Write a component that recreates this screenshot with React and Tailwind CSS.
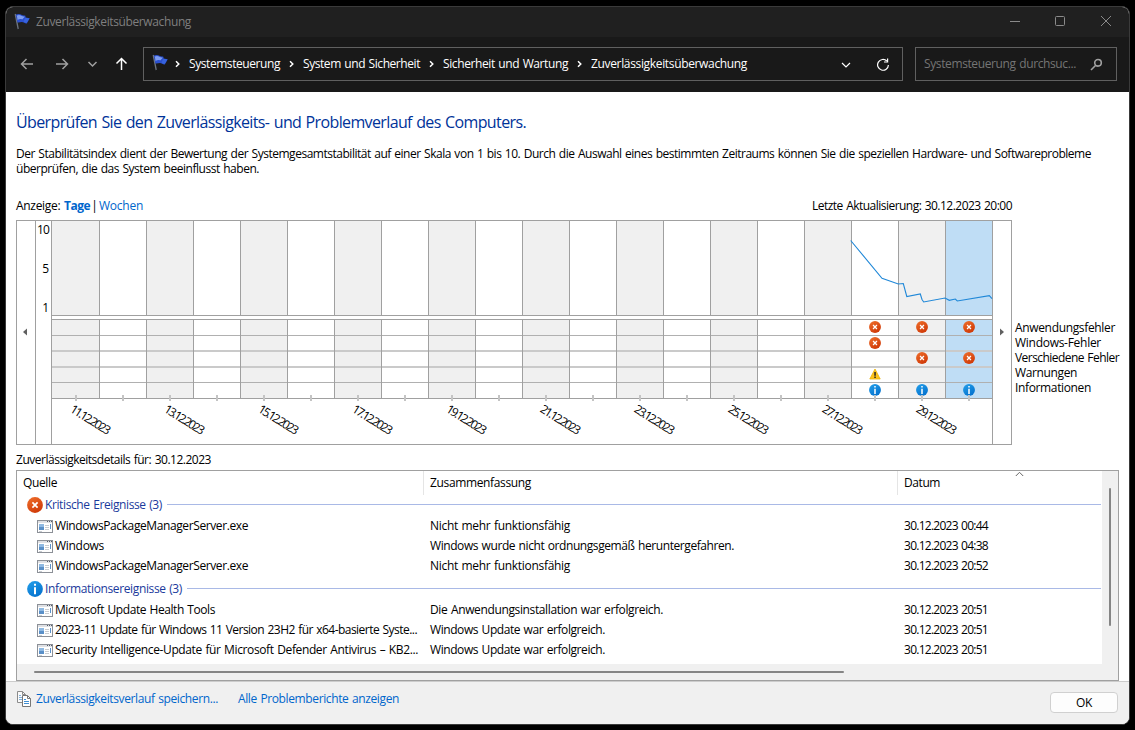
import React, { useLayoutEffect, useRef } from "react";

/* Text run whose tracking is adjusted so that it occupies `w` pixels. */
function T({ w, children, className = "" }) {
  const ref = useRef(null);
  useLayoutEffect(() => {
    const el = ref.current;
    if (!w || !el) return;
    el.style.letterSpacing = "0px";
    const natural = el.getBoundingClientRect().width;
    el.style.letterSpacing = `${(w - natural) / children.length}px`;
  }, [w, children]);
  return (
    <span ref={ref} className={`inline-block whitespace-pre [word-spacing:0.8px] ${className}`}>
      {children}
    </span>
  );
}

function Flag({ className = "" }) {
  return (
    <svg className={className} width="17" height="17" viewBox="0 0 17 17">
      <path d="M0.6 1.2 L2 0.8 L4.8 15.8 L3.6 16.2 Z" fill="#6c7480" />
      <path d="M1.8 1.8 C3.8 0.6 5.8 0.8 7.4 1.8 C9 2.8 10.4 2.2 11.4 2.8 L11.6 4.4 L15.8 5.2 L12.8 10.6 C10.8 10.8 9.8 9 7.8 9 C6.2 9 5 9.8 3.4 9.4 Z" fill="#2b50d0" />
      <path d="M2.8 2.6 C4.8 1.4 6.2 2 7.6 3 L10.8 3.8 L8.2 6.4 C6.4 5.8 5 6.2 3.6 7 Z" fill="#7d9cf0" />
      <path d="M11.4 4.8 L15.2 5.5 L12.8 9.8 C11.4 10 10.8 9 9.4 8.4 Z" fill="#3763dd" />
    </svg>
  );
}

function ErrorIcon({ size }) {
  return (
    <svg width={size} height={size} viewBox="0 0 16 16">
      <defs>
        <linearGradient id="err" x1="0" y1="0" x2="0.6" y2="1">
          <stop offset="0" stopColor="#f0702c" />
          <stop offset="1" stopColor="#d03a08" />
        </linearGradient>
      </defs>
      <circle cx="8" cy="8" r="7.9" fill="url(#err)" />
      <path d="M5.4 5.4 L10.6 10.6 M10.6 5.4 L5.4 10.6" stroke="#fff" strokeWidth="1.7" />
    </svg>
  );
}

function InfoIcon({ size }) {
  return (
    <svg width={size} height={size} viewBox="0 0 16 16">
      <defs>
        <linearGradient id="inf" x1="0" y1="0" x2="0.6" y2="1">
          <stop offset="0" stopColor="#25a0ea" />
          <stop offset="1" stopColor="#0573cf" />
        </linearGradient>
      </defs>
      <circle cx="8" cy="8" r="7.9" fill="url(#inf)" />
      <path d="M7 2.8h2v2H7z M7 6.2h2v7H7z" fill="#fff" />
    </svg>
  );
}

function WarnIcon() {
  return (
    <svg width="12" height="12" viewBox="0 0 12 12">
      <path d="M6 1 L11.2 11 H0.8 Z" fill="#fcc21b" stroke="#eab308" strokeWidth="0.8" strokeLinejoin="round" />
      <path d="M5.3 4h1.5v3.8H5.3z M5.3 8.6h1.5V10H5.3z" fill="#222" />
    </svg>
  );
}

function AppIcon() {
  return (
    <svg className="mt-px shrink-0" width="16" height="13" viewBox="0 0 16 13" shapeRendering="crispEdges">
      <path d="M0 0H16V13H0Z" fill="#8c9097" />
      <path d="M1 1H15V12H1Z" fill="#fff" />
      <path d="M1 1H15V3H1Z" fill="#dfe1e5" />
      <path d="M10 1h1v1h-1z M12 1h1v1h-1z M14 1h1v1h-1z" fill="#555b66" />
      <path d="M2 4H7V10H2Z" fill="#8fb9e2" />
      <path d="M2 7H7V10H2Z" fill="#5a90c8" />
      <path d="M8 5h4v1H8z M8 7h4v1H8z M8 9h4v1H8z M2 11h3v1H2z" fill="#c9cdd2" />
      <path d="M13 4H14V9H13Z" fill="#5b92cc" />
    </svg>
  );
}

function CopyIcon() {
  return (
    <svg width="15" height="17" viewBox="0 0 15 17">
      <path d="M0.5 0.5H5.5L8.5 3.5V11.5H0.5Z" fill="#fafafa" stroke="#8b8b8b" />
      <path d="M5.5 0.5V3.5H8.5" fill="none" stroke="#8b8b8b" />
      <path d="M2 4.5H4M2 6.5H5M2 8.5H5" stroke="#7fb0dc" />
      <path d="M5.5 4.5H10.5L13.5 7.5V15.5H5.5Z" fill="#fff" stroke="#777" />
      <path d="M10.5 4.5V7.5H13.5" fill="none" stroke="#777" />
      <path d="M7 8.5H9M7 10.5H12M7 12.5H12" stroke="#3f8fd4" />
    </svg>
  );
}

function Crumb() {
  return (
    <svg width="6" height="8" viewBox="0 0 6 8" fill="none" stroke="#fff" strokeWidth="1.5">
      <path d="M1 1.2 L3.8 4 L1 6.8" />
    </svg>
  );
}

const COLS = Array.from({ length: 20 }, (_, i) => i);
const THIN = "border-b border-b-[#b0b0b0] pb-[2px]";
const ROWS = [
  { h: "h-[16px]", line: THIN, icons: { 17: "e", 18: "e", 19: "e" } },
  { h: "h-[16px]", line: "border-b-2 border-b-[#cacaca]", icons: { 17: "e" } },
  { h: "h-[16px]", line: "border-b-2 border-b-[#cacaca] pb-[2px]", icons: { 18: "e", 19: "e" } },
  { h: "h-[15px]", line: THIN, icons: { 17: "w" } },
  { h: "h-[16px]", line: "border-b border-b-[#a0a0a0] pb-px", icons: { 17: "i", 18: "i", 19: "i" } },
];
const DATES = ["11", "13", "15", "17", "19", "21", "23", "25", "27", "29"];

const cellBg = (i) => (i === 19 ? "bg-[#bfddf5]" : i % 2 === 0 ? "bg-[#f0f0f0]" : "bg-white");
const cellW = (i) => (i === 0 ? "w-[48px]" : i === 19 ? "w-[46px]" : "w-[47px]");

function Chart() {
  return (
    <div className="flex h-[225px] w-[996px] border border-[#a0a0a0]">
      <div className="flex w-[19px] items-center justify-center border-r border-[#a0a0a0]">
        <svg className="-mt-[2px] -ml-0.5" width="4" height="8" viewBox="0 0 4 8"><path d="M4 0.5V7.5L0 4Z" fill="#606060" /></svg>
      </div>
      <div className="flex h-[95px] w-[15px] flex-col items-end justify-between pr-[2px] leading-[17px]">
        <T w={12}>10</T>
        <span>5</span>
        <span>1</span>
      </div>
      <div className="relative flex w-[942px] flex-col border-x border-[#a0a0a0]">
        <div className="flex h-[95px] border-b border-[#a0a0a0]">
          {COLS.map((i) => (
            <div key={i} className={`${cellW(i)} ${i < 19 ? "border-r" : ""} border-[#a0a0a0] ${cellBg(i)}`} />
          ))}
        </div>
        <div className="h-[3px]" />
        <div className="flex flex-col border-t border-[#a0a0a0]">
          {ROWS.map((r, n) => (
            <div key={n} className={`flex ${r.h}`}>
              {COLS.map((i) => (
                <div key={i} className={`flex h-full ${cellW(i)} ${i < 19 ? "border-r border-r-[#a0a0a0]" : ""}`}>
                  <div className={`flex flex-1 items-center justify-center ${r.line} ${cellBg(i)}`}>
                    {r.icons[i] === "e" && <ErrorIcon size={12} />}
                    {r.icons[i] === "i" && <InfoIcon size={12} />}
                    {r.icons[i] === "w" && <WarnIcon />}
                  </div>
                </div>
              ))}
            </div>
          ))}
        </div>
        <div className="-mt-1 flex">
          {COLS.map((i) => (
            <div key={i} className={`flex justify-center ${i === 0 ? "w-[48px]" : "w-[47px]"}`}>
              <div className="h-[6px] w-[2px] bg-[#c4c4c4]" />
            </div>
          ))}
        </div>
        <div className="flex pt-px">
          {DATES.map((d) => (
            <div key={d} className="w-[94px] shrink-0 pl-[23px]">
              <div className="h-[14px] w-[50px] origin-top-left rotate-[32deg] text-[12px] leading-[14px]">
                <T w={41.5}>{`${d}.12.2023`}</T>
              </div>
            </div>
          ))}
        </div>
        <svg className="absolute top-0 left-0" width="941" height="94" viewBox="52 221 941 94" fill="none">
          <polyline points="850.7,240.5 882,278.3 898.3,284 903.3,283.5 906.8,296.5 920.3,294 922,299.5 923.7,302 945,298 949.3,300.3 955.3,299 957.3,301 989.3,295.7 992,298.7" stroke="#2088d8" strokeWidth="1.1" />
        </svg>
      </div>
      <div className="flex flex-1 items-center justify-center">
        <svg className="-mt-[2px] -ml-px" width="4" height="8" viewBox="0 0 4 8"><path d="M0 0.5V7.5L4 4Z" fill="#606060" /></svg>
      </div>
    </div>
  );
}

function Group({ icon, label, w }) {
  return (
    <div className="flex h-[24px] items-center pr-px pl-[10px]">
      {icon}
      <T w={w} className="ml-[2px] text-[#1a3a9c]">{label}</T>
      <div className="-mt-px ml-[5px] h-px flex-1 bg-[#a9b9e6]" />
    </div>
  );
}

function Item({ a, aw, b, bw, c }) {
  return (
    <div className="flex h-[20px] items-center">
      <div className="flex w-[413px] items-center pl-[20px]">
        <AppIcon />
        <T w={aw} className="ml-[2px]">{a}</T>
      </div>
      <div className="w-[474px]"><T w={bw}>{b}</T></div>
      <T w={84}>{c}</T>
    </div>
  );
}

export default function App() {
  return (
    <div className="h-[730px] w-[1135px] overflow-hidden bg-black pt-[6px] pl-[5px] font-['Open_Sans','Noto_Sans',sans-serif] text-[12px] leading-[16px] text-black">
      <div className="flex h-[719px] w-[1125px] flex-col overflow-hidden rounded-lg border border-[#3a3a3a] bg-white">
        <header className="flex h-[30px] shrink-0 items-center bg-[#202020] pb-[2px] pl-[8px]">
          <Flag />
          <T w={155} className="mt-[2px] ml-[5px] text-[#7f7f7f]">Zuverlässigkeitsüberwachung</T>
          <div className="flex-1" />
          <svg width="104" height="12" viewBox="0 0 104 12" fill="none" stroke="#8a8a8a">
            <path d="M1 6.5H11" />
            <rect x="46.5" y="1.5" width="9" height="9" rx="1" />
            <path d="M92 1L102 11M102 1L92 11" />
          </svg>
          <div className="w-[16px]" />
        </header>
        <nav className="flex h-[55px] shrink-0 items-center bg-[#191919] pb-[2px] text-white">
          <svg className="ml-[14px] shrink-0" width="123" height="16" viewBox="0 0 123 16" fill="none" strokeWidth="1.5">
            <path d="M13 8H1.5M6.5 3L1.5 8L6.5 13" stroke="#a0a0a0" />
            <path d="M36 8H47.5M42.5 3L47.5 8L42.5 13" stroke="#a0a0a0" />
            <path d="M68.5 6L72.5 10L76.5 6" stroke="#a0a0a0" />
            <path d="M101.5 14V2.5M96.5 7.5L101.5 2.5L106.5 7.5" stroke="#fff" />
          </svg>
          <div className="flex h-[34px] w-[760px] shrink-0 items-center border border-[#606060] pl-[8px]">
            <Flag className="-mt-0.5" />
            <div className="ml-[6px] flex items-center">
              <Crumb />
              <T w={91} className="ml-[8px]">Systemsteuerung</T>
              <div className="w-[9px]" /><Crumb />
              <T w={117} className="ml-[8px]">System und Sicherheit</T>
              <div className="w-[9px]" /><Crumb />
              <T w={125} className="ml-[8px]">Sicherheit und Wartung</T>
              <div className="w-[9px]" /><Crumb />
              <T w={156} className="ml-[8px]">Zuverlässigkeitsüberwachung</T>
            </div>
            <div className="flex-1" />
            <svg className="mr-[12px]" width="50" height="14" viewBox="0 0 50 14" fill="none" stroke="#fff" strokeWidth="1.2">
              <path d="M2 6L6 10L10 6" />
              <path d="M46.8 4A5.4 5.4 0 1 0 48.4 8" />
              <path d="M47.6 1.5V5H44" />
            </svg>
          </div>
          <div className="ml-[12px] flex h-[34px] w-[202px] shrink-0 items-center border border-[#606060] pl-[8px] text-[#757575]">
            <T w={152}>Systemsteuerung durchsuc...</T>
            <svg className="mt-px ml-[14px]" width="13" height="13" viewBox="0 0 13 13" fill="none" stroke="#a0a0a0" strokeWidth="1.6">
              <circle cx="8" cy="4.8" r="3.3" />
              <path d="M5.5 7.5L1 12" />
            </svg>
          </div>
        </nav>

        <main className="h-[589px] shrink-0 pl-[10px]">
          <h1 className="pt-[20px] text-[16px] leading-[21px] text-[#003399]"><T w={510}>Überprüfen Sie den Zuverlässigkeits- und Problemverlauf des Computers.</T></h1>
          <p className="flex flex-col items-start pt-[13px] leading-[15px]">
            <T w={1075}>Der Stabilitätsindex dient der Bewertung der Systemgesamtstabilität auf einer Skala von 1 bis 10. Durch die Auswahl eines bestimmten Zeitraums können Sie die speziellen Hardware- und Softwareprobleme</T>
            <T w={243}>überprüfen, die das System beeinflusst haben.</T>
          </p>
          <div className="flex h-[44px] w-[996px] items-end justify-between pb-[6px]">
            <div className="flex">
              <T w={48}>Anzeige: </T>
              <T w={26} className="font-bold text-[#0066cc]">Tage</T>
              <span className="w-[9px] text-center">|</span>
              <T w={44} className="text-[#0066cc]">Wochen</T>
            </div>
            <T w={200}>Letzte Aktualisierung: 30.12.2023 20:00</T>
          </div>
          <div className="flex">
            <Chart />
            <div className="flex flex-col items-start pt-[100px] pl-[3px] leading-[15px]">
              <T w={100}>Anwendungsfehler</T>
              <T w={86}>Windows-Fehler</T>
              <T w={104}>Verschiedene Fehler</T>
              <T w={62}>Warnungen</T>
              <T w={76}>Informationen</T>
            </div>
          </div>
          <div className="h-[25px] pt-[7px]"><T w={195}>Zuverlässigkeitsdetails für: 30.12.2023</T></div>
          <div className="flex h-[211px] w-[1103px] border border-[#a0a0a0]">
            <div className="flex w-[1085px] flex-col">
              <div className="flex h-[24px] items-center">
                <div className="h-full w-[407px] border-r border-[#e5e5e5] pt-[4px] pl-[6px]"><T w={34}>Quelle</T></div>
                <div className="h-full w-[474px] border-r border-[#e5e5e5] pt-[4px] pl-[6px]"><T w={101}>Zusammenfassung</T></div>
                <div className="flex h-full flex-1 items-start pt-[4px] pl-[6px]">
                  <T w={36}>Datum</T>
                  <svg className="-mt-[4px] ml-[75px]" width="9" height="6" viewBox="0 0 9 6" fill="none" stroke="#666"><path d="M0.8 5L4.5 1.3L8.2 5" /></svg>
                </div>
              </div>
              <div className="h-[169px]">
                <div className="-mt-[2px]">
                  <Group icon={<ErrorIcon size={16} />} label="Kritische Ereignisse (3)" w={117} />
                  <div className="-mt-px mb-px">
                    <Item a="WindowsPackageManagerServer.exe" aw={193} b="Nicht mehr funktionsfähig" bw={140} c="30.12.2023 00:44" />
                    <Item a="Windows" aw={49} b="Windows wurde nicht ordnungsgemäß heruntergefahren." bw={304} c="30.12.2023 04:38" />
                    <Item a="WindowsPackageManagerServer.exe" aw={193} b="Nicht mehr funktionsfähig" bw={140} c="30.12.2023 20:52" />
                  </div>
                  <Group icon={<InfoIcon size={16} />} label="Informationsereignisse (3)" w={137} />
                  <div className="-mt-px">
                    <Item a="Microsoft Update Health Tools" aw={160} b="Die Anwendungsinstallation war erfolgreich." bw={233} c="30.12.2023 20:51" />
                    <Item a="2023-11 Update für Windows 11 Version 23H2 für x64-basierte Syste..." aw={362} b="Windows Update war erfolgreich." bw={175} c="30.12.2023 20:51" />
                    <Item a="Security Intelligence-Update für Microsoft Defender Antivirus – KB2..." aw={363} b="Windows Update war erfolgreich." bw={175} c="30.12.2023 20:51" />
                  </div>
                </div>
              </div>
              <div className="h-[16px] bg-[#f0f0f0] pt-[7px] pl-[17px]">
                <div className="h-[2px] w-[810px] rounded-full bg-[#858585]" />
              </div>
            </div>
            <div className="flex-1 bg-[#f0f0f0] pt-[17px] pl-[7px]">
              <div className="h-[138px] w-[2px] rounded-full bg-[#858585]" />
            </div>
          </div>
        </main>

        <footer className="flex flex-1 border-t border-[#cccccc] bg-[#f0f0f0] pl-[11px] text-[#0066cc]">
          <div className="pt-[9px]"><CopyIcon /></div>
          <div className="pt-[9px] pl-[4px]"><T w={182}>Zuverlässigkeitsverlauf speichern...</T></div>
          <div className="pt-[9px] pl-[20px]"><T w={161}>Alle Problemberichte anzeigen</T></div>
          <div className="flex-1" />
          <button className="mt-[10px] mr-[11px] h-[21px] w-[68px] rounded border border-[#d0d0d0] bg-[#fdfdfd] text-black"><T w={16}>OK</T></button>
        </footer>
      </div>
    </div>
  );
}
